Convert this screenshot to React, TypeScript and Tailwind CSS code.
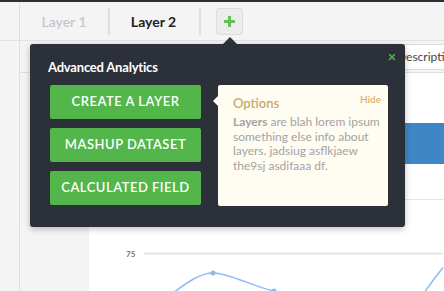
import { X } from 'lucide-react';

const actions = ['Create a Layer', 'Mashup Dataset', 'Calculated Field'];

const Chart = () => (
  <svg width="354" height="84" viewBox="0 0 354 84" className="block">
    <text x="37" y="50" fontSize="8" fontWeight="700" fill="#777" fontFamily="Lato, sans-serif">
      75
    </text>
    <line x1="55" y1="46.5" x2="354" y2="46.5" stroke="#e6e6e6" strokeWidth="2" />
    <path
      d="M84 86 C100 74 112 66 124 66 C140 66 165 80 185 84"
      fill="none"
      stroke="#8dbcef"
      strokeWidth="1.5"
    />
    <circle cx="124" cy="66" r="2.5" fill="#8dbcef" />
    <circle cx="185" cy="84" r="2.5" fill="#8dbcef" />
    <path d="M335 86 C342 76 348 68 356 58" fill="none" stroke="#8dbcef" strokeWidth="1.5" />
  </svg>
);

const Popover = () => (
  <div className="absolute left-[30px] top-[44px] h-[183px] w-[375px] rounded-[3px] bg-[#2c3038] shadow-[0_2px_6px_rgba(0,0,0,0.25)]">
    {/* arrow up to the + button */}
    <div className="absolute -top-[7px] left-[193px] h-0 w-0 border-x-[7px] border-b-[7px] border-x-transparent border-b-[#2c3038]" />
    <button className="absolute right-[8px] top-[8px] text-[#4cb648]">
      <X size={10} strokeWidth={3.5} />
    </button>
    <div className="pl-[18px] pt-[15px] text-[13px] font-bold leading-4 tracking-[-0.2px] text-white">
      Advanced Analytics
    </div>

    <div className="mt-[10px] flex gap-[17px] pl-[20px]">
      <div className="flex flex-col gap-[9px]">
        {actions.map((a) => (
          <button
            key={a}
            className="flex h-[34px] w-[151px] items-center justify-center rounded-[2px] bg-[#52b64a] text-[13px] font-semibold uppercase tracking-[0.5px] text-white"
          >
            {a}
          </button>
        ))}
      </div>

      <div className="relative h-[121px] w-[170px] rounded-[2px] bg-[#fffcf2] pl-[15px] pr-[8px] pt-[10px]">
        <div className="absolute -left-[5px] top-[11px] h-0 w-0 border-y-[5px] border-r-[5px] border-y-transparent border-r-[#fffcf2]" />
        <div className="absolute right-[7px] top-[7px] text-[10px] font-semibold text-[#d6b46f]">Hide</div>
        <div className="text-[13px] font-semibold leading-4 text-[#c8aa6c]">Options</div>
        <p className="mt-[4px] text-[12px] leading-[14.5px] text-[#a3a3a3]">
          <b className="font-bold">Layers</b> are blah lorem ipsum something else info about layers. jadsiug asflkjaew
          the9sj asdifaaa df.
        </p>
      </div>
    </div>
  </div>
);

export default function App() {
  return (
    <div className="relative h-[291px] w-[444px] overflow-hidden bg-[#f4f4f4] font-['Lato',sans-serif]">
      <div className="h-[2px] bg-[#2c2f36]" />

      <div className="flex h-[39px] border-b border-[#e2e2e2]">
        <div className="w-[20px] border-r border-[#e0e0e0]" />
        <div className="flex items-center">
          <div className="w-[88px] text-center text-[14px] font-semibold text-[#c4c8cd]">Layer 1</div>
          <div className="h-[27px] w-[2px] bg-[#dedede]" />
          <div className="w-[89px] pr-[2px] text-center text-[14px] font-bold text-[#232323]">Layer 2</div>
          <div className="h-[27px] w-[2px] bg-[#dedede]" />
          <button className="ml-[15px] flex h-[27px] w-[27px] items-center justify-center rounded-[3px] border border-[#dcdcdc] bg-[#ececec]">
            <svg width="13" height="13" viewBox="0 0 13 13">
              <path d="M6.5 1v11M1 6.5h11" stroke="#67bf5c" strokeWidth="3" />
            </svg>
          </button>
        </div>
      </div>

      <div className="flex h-[250px]">
        <div className="w-[20px] border-r border-[#e0e0e0]" />
        <div className="flex flex-1 flex-col">
          <div className="flex h-[39px] items-center justify-end border-b border-[#dedede]">
            <div className="flex h-[26px] w-[59px] items-center overflow-hidden whitespace-nowrap rounded-l-[3px] border border-r-0 border-[#dcdcdc] bg-white pl-[11px] text-[12px] text-[#444]">
              Description
            </div>
          </div>
          <div className="flex flex-1">
            <div className="w-[69px]" />
            <div className="flex flex-1 flex-col bg-white">
              <div className="h-[50px]" />
              <div className="h-[41px] bg-[#3e86c6]" />
              <div className="h-[36px] border-b border-[#e4e4e4]" />
              <div className="h-[7px]" />
              <Chart />
            </div>
          </div>
        </div>
      </div>

      <Popover />
    </div>
  );
}
